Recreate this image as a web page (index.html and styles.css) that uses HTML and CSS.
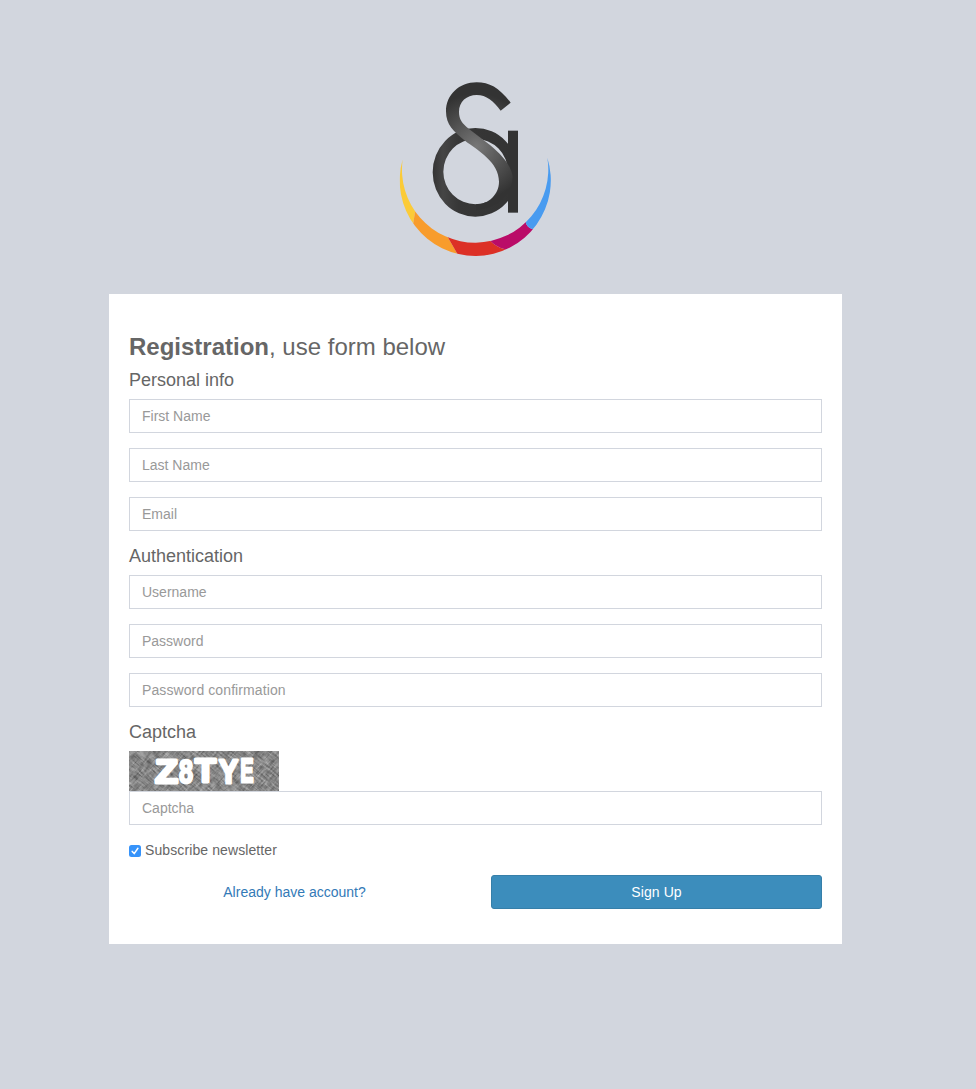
FILE: index.html
```
<!DOCTYPE html>
<html lang="en">
<head>
<meta charset="utf-8">
<title>Registration</title>
<link rel="stylesheet" href="styles.css">
</head>
<body>
<main class="register-box">
  <div class="register-logo">
    <svg class="logo" viewBox="0 0 540 600" aria-label="Logo">
      <defs>
        <radialGradient id="ink" gradientUnits="userSpaceOnUse" cx="260" cy="230" r="160">
          <stop offset="0" stop-color="#777"/>
          <stop offset=".45" stop-color="#585858"/>
          <stop offset="1" stop-color="#333"/>
        </radialGradient>
        <linearGradient id="ring" x1="0" y1="0" x2="1" y2="0">
          <stop offset="0" stop-color="#343434"/>
          <stop offset=".12" stop-color="#454545"/>
          <stop offset=".3" stop-color="#373737"/>
          <stop offset="1" stop-color="#333"/>
        </linearGradient>
        <clipPath id="crescent">
          <path d="M38 268A226.7 226.7 0 1 0 472 263A219.5 219.5 0 1 1 38 268Z"/>
        </clipPath>
      </defs>
      <g clip-path="url(#crescent)">
        <path fill="#fbcb38" d="M0 240H100V400L76 420L70 458L0 500Z"/>
        <path fill="#f89c2c" d="M76 420L70 458L40 500L100 600H230L201 550L171 497L120 400Z"/>
        <path fill="#dc3026" d="M171 497L201 550L220 600H380L345 538Q318 530 300 512L250 480Z"/>
        <path fill="#ba0c68" d="M290 503L300 512Q318 530 345 538L380 600L480 480L427 477Q409 472 407 455L380 440Z"/>
        <path fill="#489bf0" d="M407 455Q409 472 427 477L540 480V230H440L390 440Z"/>
      </g>
      <path fill="url(#ring)" fill-rule="evenodd" d="M128 307A128 133 0 0 1 384 307A128 133 0 0 1 128 307ZM160 305A97 98 0 0 0 354 305A97 98 0 0 0 160 305Z"/>
      <rect x="354" y="182" width="30" height="246" fill="#333"/>
      <path fill="url(#ink)" d="M362 98C327 53 299 37 260 37C207 37 168 75 168 124C168 164 190 184 225 212C265 242 327 276 327 335C327 372 297 403 257 403L258 420C315 418 365 385 368 320C362 285 339 258 300 225L237 177C217 161 207 148 207 126C207 95 230 75 260 75C289 75 311 93 332 122Z"/>
    </svg>
  </div>
  <form class="register-card">
    <h3 class="title"><b>Registration</b>, use form below</h3>
    <h4 class="section-title">Personal info</h4>
    <input class="field" type="text" placeholder="First Name">
    <input class="field" type="text" placeholder="Last Name">
    <input class="field" type="email" placeholder="Email">
    <h4 class="section-title">Authentication</h4>
    <input class="field" type="text" placeholder="Username">
    <input class="field" type="password" placeholder="Password">
    <input class="field spaced" type="password" placeholder="Password confirmation">
    <h4 class="section-title">Captcha</h4>
    <svg class="captcha" viewBox="0 0 150 40">
      <defs>
        <filter id="scratchA" x="0" y="0" width="100%" height="100%" color-interpolation-filters="sRGB">
          <feTurbulence type="fractalNoise" baseFrequency=".09 .6" numOctaves="3" seed="4"/>
          <feColorMatrix values=".8 0 0 0 .13  .8 0 0 0 .13  .8 0 0 0 .13  0 0 0 0 1"/>
        </filter>
        <filter id="scratchB" x="0" y="0" width="100%" height="100%" color-interpolation-filters="sRGB">
          <feTurbulence type="fractalNoise" baseFrequency=".09 .6" numOctaves="3" seed="11"/>
          <feColorMatrix values=".8 0 0 0 .13  .8 0 0 0 .13  .8 0 0 0 .13  0 0 0 0 1"/>
        </filter>
      </defs>
      <rect width="150" height="40" fill="#858585"/>
      <g transform="rotate(40 75 20)"><rect x="-20" y="-70" width="190" height="180" filter="url(#scratchA)"/></g>
      <g transform="rotate(-48 75 20)" opacity=".45"><rect x="-20" y="-70" width="190" height="180" filter="url(#scratchB)"/></g>
      <text class="captcha-text" y="32"><tspan x="26" textLength="23" lengthAdjust="spacingAndGlyphs">Z</tspan><tspan x="50" dy="-.5" textLength="14" lengthAdjust="spacingAndGlyphs" stroke-width="2.4">8</tspan><tspan x="66" dy="-.5" textLength="21" lengthAdjust="spacingAndGlyphs">T</tspan><tspan x="90" dy=".5" textLength="19" lengthAdjust="spacingAndGlyphs">Y</tspan><tspan x="111.5" dy="-.5" textLength="13" lengthAdjust="spacingAndGlyphs">E</tspan></text>
    </svg>
    <input class="field" type="text" placeholder="Captcha">
    <label class="newsletter">
      <svg class="check" viewBox="0 0 12 12">
        <rect width="12" height="12" rx="2.5" fill="#3693fa"/>
        <path d="M3.2 6.4L5.2 8.6L8.9 3.3" fill="none" stroke="#fff" stroke-width="1.5" stroke-linecap="round" stroke-linejoin="round"/>
      </svg>
      <span class="spaced">Subscribe newsletter</span>
    </label>
    <div class="actions">
      <a class="login-link" href="#">Already have account?</a>
      <button class="submit spaced" type="button">Sign Up</button>
    </div>
  </form>
</main>
</body>
</html>
```
FILE: styles.css
```
* { box-sizing: border-box; }

body {
  margin: 0;
  min-height: 1089px;
  background: #d2d6de;
  color: #666;
  font: 14px/20px "Liberation Sans", Arial, sans-serif;
}

.register-box {
  width: 733px;
  margin-left: 109px;
  padding-top: 70px;
}

.register-logo {
  height: 224px;
  padding-left: 281px;
}

.logo {
  display: block;
  width: 180px;
  height: 200px;
}

.register-card {
  height: 650px;
  padding: 40px 20px 35px;
  background: #fff;
}

.title {
  margin: 0 0 10px;
  font-size: 24px;
  font-weight: 400;
  line-height: 26px;
}

.section-title {
  margin: 0 0 8px;
  font-size: 18px;
  font-weight: 400;
  line-height: 21px;
}

.field {
  display: block;
  width: 100%;
  height: 34px;
  margin: 0 0 15px;
  padding: 6px 12px;
  border: 1px solid #d2d6de;
  border-radius: 0;
  background: #fff;
  color: #555;
  font: inherit;
}

.field::placeholder {
  color: #999;
  opacity: 1;
}

.spaced { letter-spacing: .1px; }

.captcha {
  display: block;
  width: 150px;
  height: 40px;
  overflow: hidden;
}

.captcha-text {
  font: bold 33px "Liberation Sans", Arial, sans-serif;
  fill: #fff;
  stroke: #fff;
  stroke-width: 3;
  stroke-linejoin: round;
}

.newsletter {
  display: flex;
  align-items: center;
  gap: 4px;
  height: 20px;
  margin-bottom: 15px;
}

.check {
  width: 12px;
  height: 12px;
  margin-top: 2px;
}

.actions {
  display: grid;
  grid-template-columns: 1fr 1fr;
  column-gap: 31px;
  align-items: center;
}

.login-link {
  color: #337ab7;
  text-align: center;
  text-decoration: none;
}

.submit {
  height: 34px;
  padding: 0;
  border: 1px solid #367fa9;
  border-radius: 3px;
  background: #3c8dbc;
  color: #fff;
  font: inherit;
}
```
